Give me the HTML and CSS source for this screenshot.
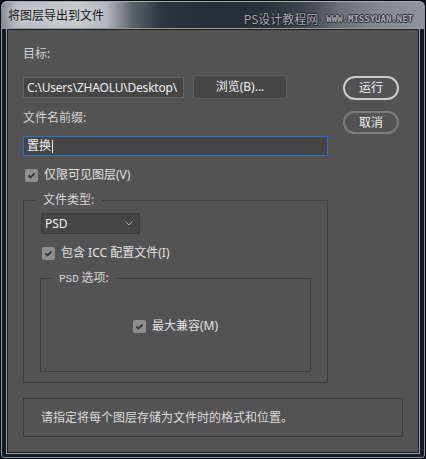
FILE: index.html
```html
<!DOCTYPE html>
<html lang="zh-CN">
<head>
<meta charset="utf-8">
<title>将图层导出到文件</title>
<link rel="stylesheet" href="styles.css">
</head>
<body>
<div class="window">
  <div class="titlebar">
    <span class="title">将图层导出到文件</span>
    <span class="wm">
      <span class="wm-cn">PS设计教程网</span>
      <span class="wm-en">WWW.MISSYUAN.NET</span>
    </span>
  </div>
  <div class="panel">
    <div class="top">
      <div class="left">
        <div class="lbl">目标:</div>
        <div class="row1">
          <div class="path">C:\Users\ZHAOLU\Desktop\</div>
          <div class="browse">浏览(B)...</div>
        </div>
        <div class="lbl lbl2">文件名前缀:</div>
        <div class="prefix">置换<span class="caret"></span></div>
        <div class="chk-row vis">
          <span class="chk"><svg width="13" height="13" viewBox="0 0 13 13"><polyline points="3.5,6.5 5.5,8.5 9.5,4.5" fill="none" stroke="#353535" stroke-width="1.8"/></svg></span>
          <span>仅限可见图层(V)</span>
        </div>
        <fieldset class="fs1">
          <legend>文件类型:</legend>
          <div class="fs1-body">
            <div class="select"><span>PSD</span><svg width="8" height="5" viewBox="0 0 8 5"><polyline points="0.5,0.5 4,4 7.5,0.5" fill="none" stroke="#a8a8a8" stroke-width="1"/></svg></div>
            <div class="chk-row icc">
              <span class="chk"><svg width="13" height="13" viewBox="0 0 13 13"><polyline points="3.5,6.5 5.5,8.5 9.5,4.5" fill="none" stroke="#353535" stroke-width="1.8"/></svg></span>
              <span>包含 ICC 配置文件(I)</span>
            </div>
            <fieldset class="fs2">
              <legend><span class="sim">PSD</span> 选项:</legend>
              <div class="fs2-body">
                <div class="chk-row">
                  <span class="chk"><svg width="13" height="13" viewBox="0 0 13 13"><polyline points="3.5,6.5 5.5,8.5 9.5,4.5" fill="none" stroke="#353535" stroke-width="1.8"/></svg></span>
                  <span>最大兼容(M)</span>
                </div>
              </div>
            </fieldset>
          </div>
        </fieldset>
      </div>
      <div class="right">
        <div class="btn run">运行</div>
        <div class="btn cancel">取消</div>
      </div>
    </div>
    <div class="info">请指定将每个图层存储为文件时的格式和位置。</div>
  </div>
</div>
</body>
</html>
```

FILE: styles.css
```css
* { box-sizing: border-box; }
html, body { margin: 0; padding: 0; }
body {
  width: 426px;
  height: 459px;
  overflow: hidden;
  background: #0d1116;
  font: 12px/16px "Noto Sans", "Noto Sans CJK SC", sans-serif;
  color: #d9d9d9;
}
.window {
  width: 426px;
  height: 459px;
  border: 1px solid #070a0d;
  border-radius: 7px 7px 4px 4px;
  padding: 0 6px 6px;
  background: #141b23;
  box-shadow: inset 0 0 0 1px #8e979f;
  overflow: hidden;
}
.titlebar {
  height: 28px;
  margin: 0 -6px;
  display: flex;
  align-items: center;
  padding: 0 12px 0 7px;
  border-radius: 6px 6px 0 0;
  background: linear-gradient(to right, #878c91 0%, #b9bdc1 4%, #c6c9cc 18%, #b3b7bb 25%, #5a626b 31%, #2c3540 38%, #242c36 50%, #28313b 62%, #3f4750 72%, #6b7178 80%, #858a90 90%, #8f949a 100%);
  box-shadow: inset 0 1px 0 #a9b0b6;
}
.title {
  color: #121212;
  font-family: "Noto Sans CJK SC", sans-serif;
  font-size: 12px;
  line-height: 16px;
  margin-top: -1px;
  text-shadow: 0 0 6px rgba(235, 238, 240, 0.9);
}
.wm {
  margin-left: auto;
  display: flex;
  align-items: center;
  gap: 8px;
  margin-top: 7px;
}
.wm-cn {
  font-family: "Noto Sans CJK SC", sans-serif;
  font-size: 12px;
  line-height: 14px;
  color: #a4a9ae;
  text-shadow: 1px 0 #1f252b, -1px 0 #1f252b, 0 1px #1f252b, 0 -1px #1f252b;
}
.wm-en {
  font-family: "DejaVu Sans Mono", monospace;
  font-weight: bold;
  font-size: 9px;
  line-height: 10px;
  color: #a9aeb3;
  text-shadow: 1px 0 #2a3036, -1px 0 #2a3036, 0 1px #2a3036, 0 -1px #2a3036;
}
.panel {
  height: 424px;
  background: #535353;
  border: 1px solid #1c1c1c;
  box-shadow: 0 0 0 1px #9aa2a9;
  padding: 16px 18px 0 15px;
}
.top { display: flex; gap: 15px; }
.left { width: 305px; }
.right {
  width: 56px;
  padding-top: 30px;
  display: flex;
  flex-direction: column;
  gap: 11px;
}
.lbl { height: 16px; color: #d4d4d4; }
.lbl2 { margin-top: 11px; }
.row1 {
  display: flex;
  align-items: center;
  gap: 9px;
  margin-top: 13px;
  height: 24px;
}
.path {
  width: 161px;
  height: 21px;
  background: #454545;
  border: 1px solid #666;
  padding-left: 3px;
  line-height: 19px;
  white-space: nowrap;
  overflow: hidden;
  letter-spacing: -0.2px;
  color: #efefef;
}
.browse {
  width: 94px;
  height: 24px;
  background: #464646;
  border: 1px solid #5f5f5f;
  text-align: center;
  line-height: 22px;
  color: #efefef;
}
.prefix {
  margin-top: 10px;
  height: 20px;
  background: #454545;
  border: 1px solid #2f6fc4;
  padding-left: 3px;
  line-height: 18px;
  color: #f2f2f2;
  display: flex;
  align-items: center;
}
.caret {
  width: 1px;
  height: 13px;
  background: #f0f0f0;
  margin-left: 1px;
}
.chk-row {
  display: flex;
  align-items: center;
  gap: 6px;
  height: 16px;
  color: #e2e2e2;
}
.vis { margin-top: 11px; padding-left: 2px; }
.chk {
  width: 13px;
  height: 13px;
  border-radius: 2px;
  background: #8e8e8e;
  display: block;
}
.chk svg { display: block; }
fieldset {
  margin: 0;
  padding: 0;
  min-width: 0;
  border: 1px solid #3d3d3d;
}
legend {
  padding: 0 8px;
  line-height: 16px;
  color: #d6d6d6;
}
.fs1 { margin-top: 9px; width: 305px; }
.fs1 legend { margin-left: 11px; }
.fs1-body { padding: 5px 0 10px 17px; }
.select {
  width: 99px;
  height: 21px;
  background: #454545;
  border: 1px solid #3c3c3c;
  display: flex;
  align-items: center;
  justify-content: space-between;
  padding: 0 6px 0 3px;
  color: #f0f0f0;
}
.icc { margin-top: 11px; padding-left: 1px; }
.fs2 { margin: 8px 0 0 -1px; width: 271px; }
.fs2 legend { margin-left: 10px; font-family: "Noto Sans CJK SC", sans-serif; }
.sim { font-family: "Liberation Mono", monospace; font-size: 11px; }
.fs2-body {
  height: 84px;
  padding-bottom: 6px;
  display: flex;
  align-items: center;
  justify-content: center;
}
.btn {
  height: 24px;
  border-radius: 12px;
  text-align: center;
  color: #f2f2f2;
  display: flex;
  align-items: center;
  justify-content: center;
}
.run { border: 2px solid #cdcdcd; }
.cancel { height: 23px; border: 2px solid #7c7c7c; }
.info {
  margin-top: 15px;
  width: 380px;
  height: 39px;
  border: 1px solid #3c3c3c;
  padding-left: 17px;
  line-height: 37px;
  color: #dcdcdc;
}
```
